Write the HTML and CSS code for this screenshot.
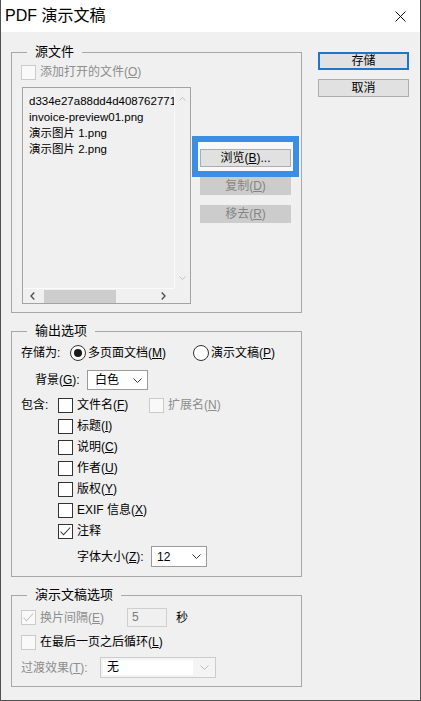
FILE: index.html
```html
<!DOCTYPE html>
<html lang="zh-CN">
<head>
  <meta charset="UTF-8">
  <title>PDF 演示文稿</title>
  <link rel="stylesheet" href="styles.css">
</head>
<body>
  <div class="window">
    <div class="titlebar">
      <span class="title">PDF 演示文稿</span>
      <svg class="close" width="11" height="11" viewBox="0 0 11 11">
        <path d="M0.5 0.5 L10.5 10.5 M10.5 0.5 L0.5 10.5" stroke="#111" stroke-width="1" fill="none"/>
      </svg>
    </div>

    <div class="client">
      <div class="groups">
        <!-- 源文件 -->
        <fieldset class="group group-source">
          <legend>源文件</legend>
          <label class="row check off open-row"><span class="box"></span>添加打开的文件(<u>O</u>)</label>
          <div class="source-body">
            <div class="listbox">
              <div class="list-items">
                <div>d334e27a88dd4d4087627713f2a1c.png</div>
                <div>invoice-preview01.png</div>
                <div>演示图片 1.png</div>
                <div>演示图片 2.png</div>
              </div>
              <div class="vscroll">
                <svg width="7" height="4" viewBox="0 0 7 4"><polyline points="0.5,3.5 3.5,0.5 6.5,3.5" fill="none" stroke="#c2c2c2"/></svg>
                <svg width="7" height="4" viewBox="0 0 7 4"><polyline points="0.5,0.5 3.5,3.5 6.5,0.5" fill="none" stroke="#c2c2c2"/></svg>
              </div>
              <div class="hscroll">
                <svg width="5" height="8" viewBox="0 0 5 8"><polyline points="4.3,0.5 1,4 4.3,7.5" fill="none" stroke="#505050" stroke-width="1.4"/></svg>
                <span class="thumb"></span>
                <svg class="right-arrow" width="5" height="8" viewBox="0 0 5 8"><polyline points="0.7,0.5 4,4 0.7,7.5" fill="none" stroke="#505050" stroke-width="1.4"/></svg>
              </div>
              <div class="corner"></div>
            </div>
            <div class="file-buttons">
              <div class="focus-ring"></div>
              <button class="btn">浏览(<u>B</u>)...</button>
              <button class="btn off">复制(<u>D</u>)</button>
              <button class="btn off">移去(<u>R</u>)</button>
            </div>
          </div>
        </fieldset>

        <!-- 输出选项 -->
        <fieldset class="group group-output">
          <legend>输出选项</legend>
          <div class="row save-row">
            <span class="save-label">存储为:</span>
            <label class="radio on"><span class="dot"></span><span class="first-option">多页面文档(<u>M</u>)</span></label>
            <label class="radio"><span class="dot"></span>演示文稿(<u>P</u>)</label>
          </div>
          <div class="row bg-row">
            <span class="bg-label">背景(<u>G</u>):</span>
            <div class="select bg-select">
              <span>白色</span>
              <svg width="9" height="5" viewBox="0 0 9 5"><polyline points="0.5,0.5 4.5,4.5 8.5,0.5" fill="none" stroke="#333"/></svg>
            </div>
          </div>
          <div class="row include-row">
            <span class="include-label">包含:</span>
            <label class="check name-check"><span class="box"></span>文件名(<u>F</u>)</label>
            <label class="check off"><span class="box"></span>扩展名(<u>N</u>)</label>
          </div>
          <div class="row sub-row"><label class="check"><span class="box"></span>标题(<u>I</u>)</label></div>
          <div class="row sub-row"><label class="check"><span class="box"></span>说明(<u>C</u>)</label></div>
          <div class="row sub-row"><label class="check"><span class="box"></span>作者(<u>U</u>)</label></div>
          <div class="row sub-row"><label class="check"><span class="box"></span>版权(<u>Y</u>)</label></div>
          <div class="row sub-row"><label class="check"><span class="box"></span>EXIF 信息(<u>X</u>)</label></div>
          <div class="row sub-row">
            <label class="check">
              <span class="box"><svg width="13" height="13" viewBox="0 0 13 13"><polyline points="1.5,6.5 4.5,9.8 11.2,2.5" fill="none" stroke="#333" stroke-width="1.1"/></svg></span>注释
            </label>
          </div>
          <div class="row font-row">
            <span class="font-label">字体大小(<u>Z</u>):</span>
            <div class="select size-select">
              <span>12</span>
              <svg width="9" height="5" viewBox="0 0 9 5"><polyline points="0.5,0.5 4.5,4.5 8.5,0.5" fill="none" stroke="#333"/></svg>
            </div>
          </div>
        </fieldset>

        <!-- 演示文稿选项 -->
        <fieldset class="group group-slides">
          <legend>演示文稿选项</legend>
          <div class="row interval-row">
            <label class="check off interval-check">
              <span class="box"><svg width="13" height="13" viewBox="0 0 13 13"><polyline points="1.5,6.5 4.5,9.8 11.2,2.5" fill="none" stroke="#c4c4c4" stroke-width="1.1"/></svg></span>换片间隔(<u>E</u>)
            </label>
            <span class="num">5</span>
            <span class="unit">秒</span>
          </div>
          <label class="row check loop-row"><span class="box"></span>在最后一页之后循环(<u>L</u>)</label>
          <div class="row effect-row">
            <span class="effect-label">过渡效果(<u>T</u>):</span>
            <div class="select off effect-select">
              <span class="value">无</span>
              <svg width="9" height="5" viewBox="0 0 9 5"><polyline points="0.5,0.5 4.5,4.5 8.5,0.5" fill="none" stroke="#bcbcbc"/></svg>
            </div>
          </div>
        </fieldset>
      </div>

      <div class="actions">
        <button class="btn default">存储</button>
        <button class="btn">取消</button>
      </div>
    </div>
  </div>
</body>
</html>
```

FILE: styles.css
```css
* {
  box-sizing: border-box;
}
body {
  margin: 0;
  background: #f0f0f0;
  font-family: "Liberation Sans", "Noto Sans CJK SC", sans-serif;
  font-size: 12px;
  color: #000;
}
u {
  text-decoration-thickness: 1px;
  text-underline-offset: 1px;
}

/* window frame */
.window {
  width: 421px;
  height: 701px;
  border: 1px solid #505050;
  border-top: 0;
  background: #f0f0f0;
}
.titlebar {
  height: 32px;
  display: flex;
  align-items: center;
  justify-content: space-between;
  padding: 0 14px 0 4px;
  background: #fff;
}
.title {
  font-size: 16px;
  line-height: 20px;
}
.client {
  display: flex;
  gap: 16px;
  padding: 12px 10px 0;
}
.groups {
  width: 291px;
  display: flex;
  flex-direction: column;
  gap: 10px;
}

/* group boxes */
.group {
  margin: 0;
  min-width: 0;
  border: 1px solid #a8a8a8;
  padding: 0 9px 8px;
}
.group legend {
  margin-left: 6px;
  padding: 0 8px;
  font-size: 13px;
  line-height: 16px;
}
.group-output {
  padding-bottom: 9px;
}

/* rows */
.row {
  display: flex;
  align-items: center;
  height: 16px;
  line-height: 16px;
  white-space: nowrap;
}
.check {
  display: flex;
  align-items: center;
}
.check .box {
  flex: none;
  width: 15px;
  height: 15px;
  margin-right: 4px;
  border: 1px solid #333;
  background: #fff;
}
.check .box svg {
  display: block;
}
.check.off {
  color: #8d8d8d;
}
.check.off .box,
.loop-row .box {
  border-color: #cbcbcb;
  background: #f9f9f9;
}
.radio {
  display: flex;
  align-items: center;
}
.radio .dot {
  flex: none;
  width: 16px;
  height: 16px;
  margin-right: 2px;
  border: 1px solid #333;
  border-radius: 50%;
  background: #fff;
  display: flex;
  align-items: center;
  justify-content: center;
}
.radio.on .dot::after {
  content: "";
  width: 8px;
  height: 8px;
  border-radius: 50%;
  background: #1a1a1a;
}
.select {
  display: flex;
  align-items: center;
  justify-content: space-between;
  height: 100%;
  border: 1px solid #9a9a9a;
  background: #fff;
  padding: 0 5px 0 7px;
}
.select svg {
  display: block;
}

/* 源文件 */
.open-row {
  margin-top: 4px;
}
.source-body {
  display: flex;
  align-items: flex-start;
  margin-top: 7px;
}
.listbox {
  display: grid;
  grid-template-columns: 151px 16px;
  grid-template-rows: 200px 15px;
  width: 169px;
  height: 217px;
  margin-left: 1px;
  border: 1px solid #a3a3a3;
  background: #f0f0f0;
}
.list-items {
  overflow: hidden;
  padding: 5px 0 0 6px;
  font-size: 11.5px;
  line-height: 16px;
  white-space: nowrap;
}
.vscroll {
  display: flex;
  flex-direction: column;
  align-items: center;
  justify-content: space-between;
  padding: 9px 0 8px;
  border-left: 1px solid #fafafa;
}
.vscroll svg {
  display: block;
}
.hscroll {
  display: flex;
  align-items: center;
  padding-left: 7px;
  border-top: 1px solid #fafafa;
}
.hscroll svg {
  display: block;
}
.thumb {
  width: 72px;
  height: 13px;
  margin-left: 9px;
  background: #cdcdcd;
}
.hscroll .right-arrow {
  margin-left: auto;
  margin-right: 8px;
}
.corner {
  background: #f0f0f0;
}
.file-buttons {
  position: relative;
  display: flex;
  flex-direction: column;
  margin-left: 9px;
  padding-top: 62px;
}
.focus-ring {
  position: absolute;
  left: -8px;
  top: 49px;
  width: 107px;
  height: 41px;
  border: 6px solid #3a8ee6;
  background: #f8f8f8;
}
.file-buttons .btn {
  position: relative;
}
.file-buttons .btn + .btn {
  margin-top: 10px;
}

/* buttons */
.btn {
  width: 91px;
  height: 18px;
  padding: 0;
  border: 1px solid #adadad;
  background: #e1e1e1;
  font: inherit;
  line-height: 16px;
  color: #000;
}
.btn.default {
  border: 2px solid #1a76cf;
  line-height: 14px;
}
.btn.off {
  border-color: #cccccc;
  background: #cccccc;
  color: #858585;
}
.actions {
  width: 91px;
  display: flex;
  flex-direction: column;
  gap: 9px;
  padding-top: 8px;
}

/* 输出选项 */
.save-row {
  margin-top: 6px;
}
.save-label {
  width: 49px;
}
.first-option {
  width: 80px;
}
.radio + .radio {
  margin-left: 25px;
}
.bg-row {
  height: 20px;
  margin-top: 9px;
  padding-left: 14px;
}
.bg-label {
  width: 52px;
}
.bg-select {
  width: 61px;
}
.include-row {
  margin-top: 7px;
}
.include-label {
  width: 37px;
}
.name-check {
  width: 91px;
}
.sub-row {
  margin-top: 5px;
  padding-left: 37px;
}
.font-row {
  height: 21px;
  margin-top: 7px;
  padding-left: 56px;
}
.font-label {
  width: 74px;
}
.size-select {
  width: 56px;
  padding-left: 5px;
}

/* 演示文稿选项 */
.interval-row {
  height: 19px;
  margin-top: 5px;
}
.interval-check {
  width: 106px;
}
.num {
  width: 40px;
  height: 19px;
  padding-left: 4px;
  border: 1px solid #cfcfcf;
  background: #f0f0f0;
  line-height: 17px;
  color: #7a7a7a;
}
.unit {
  margin-left: 9px;
}
.loop-row {
  margin-top: 7px;
}
.effect-row {
  height: 21px;
  margin-top: 7px;
  color: #8d8d8d;
}
.effect-label {
  width: 79px;
}
.effect-select {
  width: 116px;
  padding: 2px 6px 2px 2px;
}
.select.off {
  border-color: #cccccc;
  background: #f4f4f4;
}
.effect-select .value {
  width: 90px;
  height: 100%;
  padding-left: 4px;
  background: #fff;
  color: #000;
  line-height: 15px;
}
```
